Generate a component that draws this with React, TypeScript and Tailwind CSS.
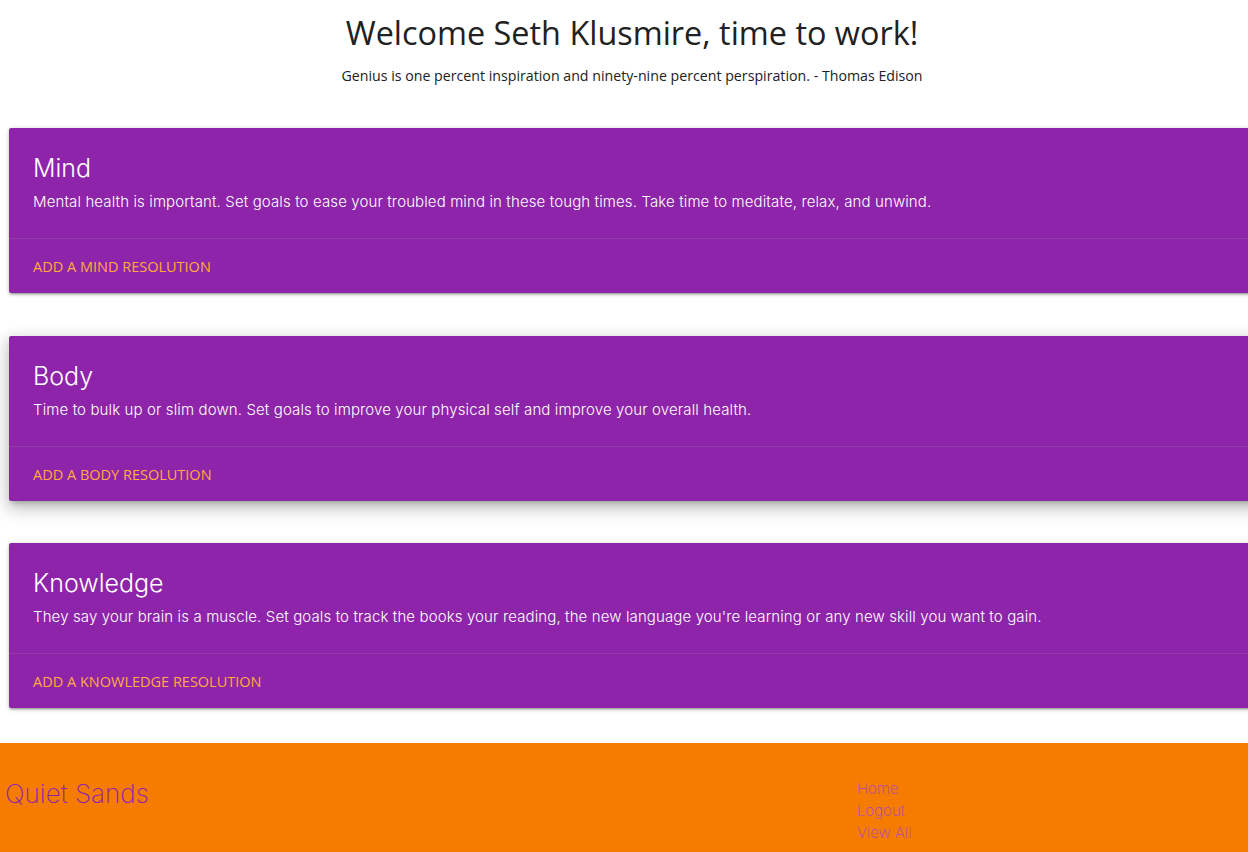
import React from 'react';

const cards = [
  { title: 'Mind', text: 'Mental health is important. Set goals to ease your troubled mind in these tough times. Take time to meditate, relax, and unwind.', action: 'ADD A MIND RESOLUTION', raised: false },
  { title: 'Body', text: 'Time to bulk up or slim down. Set goals to improve your physical self and improve your overall health.', action: 'ADD A BODY RESOLUTION', raised: true },
  { title: 'Knowledge', text: "They say your brain is a muscle. Set goals to track the books your reading, the new language you're learning or any new skill you want to gain.", action: 'ADD A KNOWLEDGE RESOLUTION', raised: false },
];

const App: React.FC = () => {
  return (
    <div className="w-[1248px] overflow-hidden bg-white">
      <div className="w-[1264px]">
        <header className="pt-[10px] text-center text-[#212121] font-['Open_Sans','Noto_Sans',sans-serif]">
          <h1 className="text-[32.4px] leading-[44px]">Welcome Seth Klusmire, time to work!</h1>
          <p className="mt-[12px] text-[14.2px] leading-[20px]">Genius is one percent inspiration and ninety-nine percent perspiration. - Thomas Edison</p>
        </header>

        <div className="mt-[42px] flex flex-col gap-[42.5px] pl-[9px] pb-[35px]">
          {cards.map((card) => (
            <div
              key={card.title}
              className={
                card.raised
                  ? 'bg-[#8e24aa] rounded-[2px] shadow-[0_8px_17px_2px_rgba(0,0,0,0.14),0_3px_14px_2px_rgba(0,0,0,0.12),0_5px_5px_-3px_rgba(0,0,0,0.2)]'
                  : 'bg-[#8e24aa] rounded-[2px] shadow-[0_2px_2px_0_rgba(0,0,0,0.14),0_3px_1px_-2px_rgba(0,0,0,0.12),0_1px_5px_0_rgba(0,0,0,0.2)]'
              }
            >
              <div className="h-[110px] px-[24px] pt-[23px] text-white font-['Inter','Lato',sans-serif]">
                <h2 className="text-[25px] leading-[34px] font-light">{card.title}</h2>
                <p className="mt-[7px] text-[15px] leading-[20px] tracking-[0.12px] font-light">{card.text}</p>
              </div>
              <div className="h-[55px] border-t border-[rgba(160,160,160,0.2)] px-[24px] pt-[17px] font-['Open_Sans','Noto_Sans',sans-serif] text-[14.5px] leading-[22px] text-[#ffab40]">
                {card.action}
              </div>
            </div>
          ))}
        </div>

        <footer className="h-[120px] bg-[#f57c00] flex font-['Inter','Lato',sans-serif] font-extralight">
          <div className="w-[848px] pl-[5px] pt-[36px] text-[26px] leading-[30px] text-[#8e24aa]">Quiet Sands</div>
          <ul className="pl-[9px] pt-[35px] text-[15px] leading-[22px] text-[#ab47bc]">
            <li>Home</li>
            <li>Logout</li>
            <li>View All</li>
          </ul>
        </footer>
      </div>
    </div>
  );
};

export default App;
